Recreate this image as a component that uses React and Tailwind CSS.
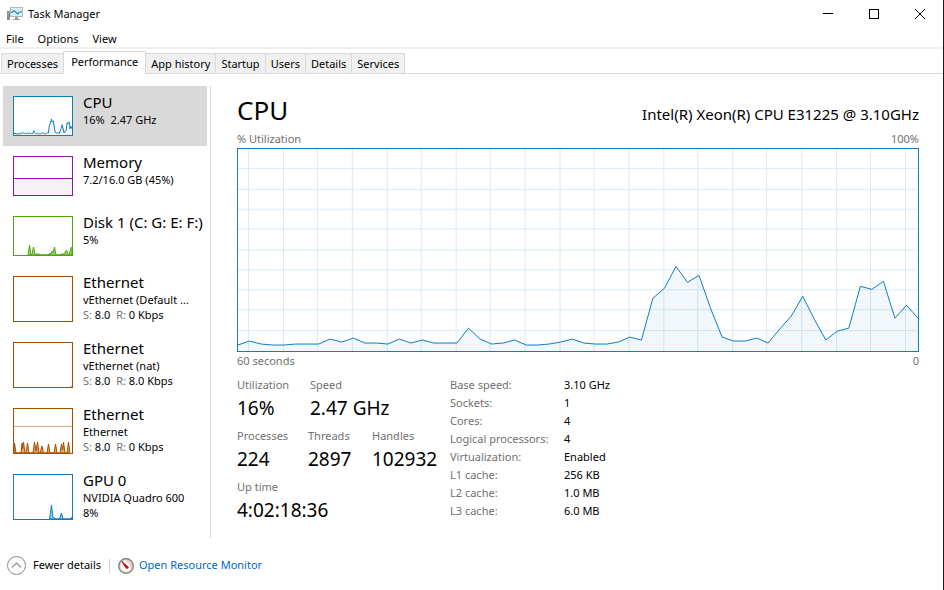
const CHART_W = 681;
const CHART_H = 203;

// y offsets of the utilization line, one sample per second
const history = [
    197, 193, 196, 197, 197, 196, 196, 196, 191, 194, 190, 195, 195, 196, 191,
    195, 192, 195, 195, 195, 180, 191, 196, 195, 192, 197, 197, 196, 194, 191,
    195, 196, 196, 194, 189, 192, 150, 140, 118, 134, 127, 160, 189, 193, 193,
    190, 195, 181, 168, 148, 171, 192, 183, 180, 138, 141, 133, 170, 157, 170,
];

const toPoints = (values, width) =>
    values.map((y, i) => `${((i * width) / (values.length - 1)).toFixed(1)},${y}`).join(' ');

const menus = ['File', 'Options', 'View'];
const tabs = ['Processes', 'Performance', 'App history', 'Startup', 'Users', 'Details', 'Services'];

const CpuThumb = () => {
    const line = toPoints(history.map((y) => (y * 38) / CHART_H), 58);
    return (
        <svg viewBox="0 0 58 38" className="block h-full w-full" aria-hidden="true">
            <polygon points={`0,38 ${line} 58,38`} fill="#f1f6fa" />
            <polyline points={line} fill="none" stroke="#117dbb" />
        </svg>
    );
};

const MemoryThumb = () => (
    <svg viewBox="0 0 58 38" className="block h-full w-full" aria-hidden="true">
        <rect x="0" y="22" width="58" height="16" fill="#f4f2f4" />
        <path d="M0 21.5H58" stroke="#8b12ae" />
    </svg>
);

const DiskThumb = () => (
    <svg viewBox="0 0 58 38" className="block h-full w-full" aria-hidden="true">
        <path
            d="M14 38L15.5 28L17 38L18 37L19.5 30L21 38L22 37H25L26 38H34L36 36L37 37L38.500 34L39 36L40.500 30L42 38H46L47 37H50L52.500 33L54 37L55 38L57 31L58 30V38Z"
            fill="#4da60c"
            fillOpacity="0.5"
            stroke="#4da60c"
        />
    </svg>
);

const EthernetIdleThumb = () => (
    <svg viewBox="0 0 58 44" className="block h-full w-full" aria-hidden="true">
        <path d="M56 44L58 42V44Z" fill="#d9a87c" />
    </svg>
);

const EthernetThumb = () => (
    <svg viewBox="0 0 58 44" className="block h-full w-full" aria-hidden="true">
        <path d="M0 17.500H58" stroke="#d9a87c" />
        <path
            d="M0 44L0.500 34L2 44H7L8 34L8.500 40L9.500 33L11 44H12L13.500 34L15 44H19L20.500 33L22 42L23.500 33L25 44H26L28 37L29.500 44H33L34.500 35L36 44H40L41.500 35L43 44H46L47.500 35L48.500 41L49.500 33L51 44H53L54.500 33L56 44Z"
            fill="#a74f01"
            fillOpacity="0.5"
            stroke="#a74f01"
        />
    </svg>
);

const GpuThumb = () => (
    <svg viewBox="0 0 58 44" className="block h-full w-full" aria-hidden="true">
        <path
            d="M35.500 44L37.500 30L39 43H41L42 44H45.500L47.500 38L49 44H57L58 42V44Z"
            fill="#117dbb"
            fillOpacity="0.4"
            stroke="#117dbb"
        />
    </svg>
);

const Rates = ({ s, r }) => (
    <>
        <span className="text-[#707070]">S: </span>
        {s}
        <span className="text-[#707070]">{'  R: '}</span>
        {r}
    </>
);

const devices = [
    { name: 'CPU', lines: ['16%  2.47 GHz'], border: 'border-[#117dbb]', Thumb: CpuThumb, active: true },
    { name: 'Memory', lines: ['7.2/16.0 GB (45%)'], border: 'border-[#8b12ae]', Thumb: MemoryThumb },
    { name: 'Disk 1 (C: G: E: F:)', lines: ['5%'], border: 'border-[#4da60c]', Thumb: DiskThumb },
    {
        name: 'Ethernet',
        lines: ['vEthernet (Default ...', <Rates key="r" s="8.0" r="0 Kbps" />],
        border: 'border-[#a74f01]',
    },
    {
        name: 'Ethernet',
        lines: ['vEthernet (nat)', <Rates key="r" s="8.0" r="8.0 Kbps" />],
        border: 'border-[#a74f01]',
        Thumb: EthernetIdleThumb,
    },
    {
        name: 'Ethernet',
        lines: ['Ethernet', <Rates key="r" s="8.0" r="0 Kbps" />],
        border: 'border-[#a74f01]',
        Thumb: EthernetThumb,
    },
    { name: 'GPU 0', lines: ['NVIDIA Quadro 600', '8%'], border: 'border-[#117dbb]', Thumb: GpuThumb },
];

const specs = [
    ['Base speed:', '3.10 GHz'],
    ['Sockets:', '1'],
    ['Cores:', '4'],
    ['Logical processors:', '4'],
    ['Virtualization:', 'Enabled'],
    ['L1 cache:', '256 KB'],
    ['L2 cache:', '1.0 MB'],
    ['L3 cache:', '6.0 MB'],
];

const TitleBar = () => (
    <header className="flex h-7 items-center pl-[7px]">
        <svg width="16" height="16" viewBox="0 0 16 16" aria-hidden="true">
            <rect x="0" y="5" width="3" height="9" fill="#8b9094" />
            <rect x="1" y="6" width="1" height="2" fill="#5fd35f" />
            <rect x="3" y="1" width="13" height="10" fill="#b4b8ba" />
            <rect x="4" y="2" width="11" height="8" fill="#d5effb" />
            <path d="M4 6.500H5L7 4.500L10.500 8L12.500 6H15" fill="none" stroke="#1d8fc4" strokeWidth="1.200" />
            <path d="M8 11H11V13H13V14H6V13H8Z" fill="#9a9ea1" />
        </svg>
        <h1 className="ml-[5px]">Task Manager</h1>
        <div className="ml-auto flex">
            <button aria-label="Minimize" className="flex h-7 w-[46px] items-center justify-center">
                <svg width="10" height="10" viewBox="0 0 10 10">
                    <path d="M0 4.500H10" stroke="#000" />
                </svg>
            </button>
            <button aria-label="Maximize" className="flex h-7 w-[46px] items-center justify-center">
                <svg width="10" height="10" viewBox="0 0 10 10">
                    <rect x="0.500" y="0.500" width="9" height="9" fill="none" stroke="#000" />
                </svg>
            </button>
            <button aria-label="Close" className="flex h-7 w-[46px] items-center justify-center">
                <svg width="10" height="10" viewBox="0 0 10 10">
                    <path d="M0 0L10 10M10 0L0 10" stroke="#000" />
                </svg>
            </button>
        </div>
    </header>
);

const TabBar = () => (
    <div role="tablist" className="flex h-[25px] items-end border-b border-[#d9d9d9] pl-px">
        {tabs.map((tab) =>
            tab === 'Performance' ? (
                <button
                    key={tab}
                    role="tab"
                    aria-selected="true"
                    className="-mb-px -ml-px h-[23px] border border-b-0 border-[#d9d9d9] bg-white px-[7px] pb-[2px] leading-4"
                >
                    {tab}
                </button>
            ) : (
                <button
                    key={tab}
                    role="tab"
                    aria-selected="false"
                    className="h-5 border-t border-r border-[#d9d9d9] bg-[#f0f0f0] px-[5px] leading-4 first:border-l"
                >
                    {tab}
                </button>
            )
        )}
    </div>
);

const DeviceItem = ({ name, lines, border, Thumb, active }) => (
    <button
        className={`flex w-full items-start gap-[10px] py-[10px] pr-1 pl-[10px] text-left ${active ? 'bg-[#d9d9d9]' : ''}`}
    >
        <span className={`w-[60px] shrink-0 border bg-white ${lines.length > 1 ? 'h-[46px]' : 'h-10'} ${border}`}>
            {Thumb && <Thumb />}
        </span>
        <span className="-mt-1 -mb-2 flex min-w-0 flex-col whitespace-pre">
            <span className="text-[15px] leading-5">{name}</span>
            {lines.map((line, i) => (
                <span key={i} className="leading-[15px]">
                    {line}
                </span>
            ))}
        </span>
    </button>
);

const UtilizationChart = () => {
    const line = toPoints(history, CHART_W);
    const columns = Array.from({ length: 20 }, (_, i) => ((i * 3 + 1) * CHART_W) / 59);
    const rows = Array.from({ length: 9 }, (_, i) => Math.round(((i + 1) * CHART_H) / 10) - 0.5);
    return (
        <svg
            viewBox={`0 0 ${CHART_W} ${CHART_H}`}
            preserveAspectRatio="none"
            className="block h-[204px] w-full border border-[#117dbb]"
            role="img"
            aria-label="CPU utilization over 60 seconds"
        >
            {columns.map((x) => (
                <path key={x} d={`M${Math.floor(x) - 0.5} 0V${CHART_H}`} stroke="#d9eaf4" vectorEffect="non-scaling-stroke" />
            ))}
            {rows.map((y) => (
                <path key={y} d={`M0 ${y}H${CHART_W}`} stroke="#d9eaf4" vectorEffect="non-scaling-stroke" />
            ))}
            <polygon points={`0,${CHART_H} ${line} ${CHART_W},${CHART_H}`} fill="#117dbb" fillOpacity="0.06" />
            <polyline points={line} fill="none" stroke="#117dbb" vectorEffect="non-scaling-stroke" />
        </svg>
    );
};

const Stat = ({ label, value, className = '' }) => (
    <div className={className}>
        <dt className="leading-4 text-[#707070]">{label}</dt>
        <dd className="text-[19px] leading-[30px]">{value}</dd>
    </div>
);

const App = () => (
    <div className="flex min-h-screen flex-col border-r border-[#1a1a1a] bg-white font-['Noto_Sans','Open_Sans',sans-serif] text-[11px] text-black">
        <TitleBar />
        <nav className="flex h-[21px] items-center gap-[14px] border-b-2 border-[#f0f0f0] pt-[3px] pl-[6px]">
            {menus.map((menu) => (
                <button key={menu}>{menu}</button>
            ))}
        </nav>
        <TabBar />

        <main className="flex grow gap-[26px] pt-3 pr-6 pl-[3px]">
            <aside className="flex w-[208px] shrink-0 border-r border-[#d9d9d9]">
                <div className="w-[204px]">
                    {devices.map((device, i) => (
                        <DeviceItem key={i} {...device} />
                    ))}
                </div>
            </aside>

            <section className="grow">
                <div className="flex items-end justify-between pt-1">
                    <h2 className="text-[26px] leading-10">CPU</h2>
                    <p className="text-[15px] leading-8">Intel(R) Xeon(R) CPU E31225 @ 3.10GHz</p>
                </div>
                <div className="flex justify-between leading-[18px] text-[#707070]">
                    <span>% Utilization</span>
                    <span>100%</span>
                </div>
                <UtilizationChart />
                <div className="flex justify-between leading-[18px] text-[#707070]">
                    <span>60 seconds</span>
                    <span>0</span>
                </div>

                <div className="flex pt-[7px]">
                    <dl className="flex w-[213px] flex-col gap-[5px]">
                        <div className="flex">
                            <Stat label="Utilization" value="16%" className="w-[73px]" />
                            <Stat label="Speed" value="2.47 GHz" />
                        </div>
                        <div className="flex">
                            <Stat label="Processes" value="224" className="w-[71px]" />
                            <Stat label="Threads" value="2897" className="w-16" />
                            <Stat label="Handles" value="102932" />
                        </div>
                        <Stat label="Up time" value="4:02:18:36" />
                    </dl>
                    <dl className="-mt-px grid grid-cols-[114px_auto] content-start leading-[18px]">
                        {specs.map(([label, value]) => (
                            <div key={label} className="col-span-2 grid grid-cols-subgrid">
                                <dt className="text-[#707070]">{label}</dt>
                                <dd>{value}</dd>
                            </div>
                        ))}
                    </dl>
                </div>
            </section>
        </main>

        <footer className="flex h-[52px] items-center pt-[3px] pl-[7px]">
            <button className="flex items-center gap-[7px]">
                <svg width="19" height="19" viewBox="0 0 19 19" fill="none" aria-hidden="true">
                    <circle cx="9.500" cy="9.500" r="9" stroke="#8a8a8a" />
                    <path d="M5 11.500L9.500 7L14 11.500" stroke="#a0a0a0" strokeWidth="1.500" />
                </svg>
                Fewer details
            </button>
            <span className="mx-2 h-[14px] w-px bg-[#d0d0d0]"></span>
            <a href="#resource-monitor" className="flex items-center gap-[5px] text-[#0066cc]">
                <svg width="16" height="16" viewBox="0 0 16 16" fill="none" aria-hidden="true">
                    <circle cx="8" cy="8" r="7.300" fill="#d8d6d2" stroke="#77736f" strokeWidth="1.200" />
                    <circle cx="8" cy="8" r="5.500" fill="#fbfaf7" />
                    <path d="M9 3.500A4.500 4.500 0 0 1 12.500 8.500" stroke="#f0a080" />
                    <path d="M4 3.500L8.500 10.500L10.500 9.500Z" fill="#d60000" stroke="#d60000" strokeLinejoin="round" />
                </svg>
                Open Resource Monitor
            </a>
        </footer>
    </div>
);

export default App;
